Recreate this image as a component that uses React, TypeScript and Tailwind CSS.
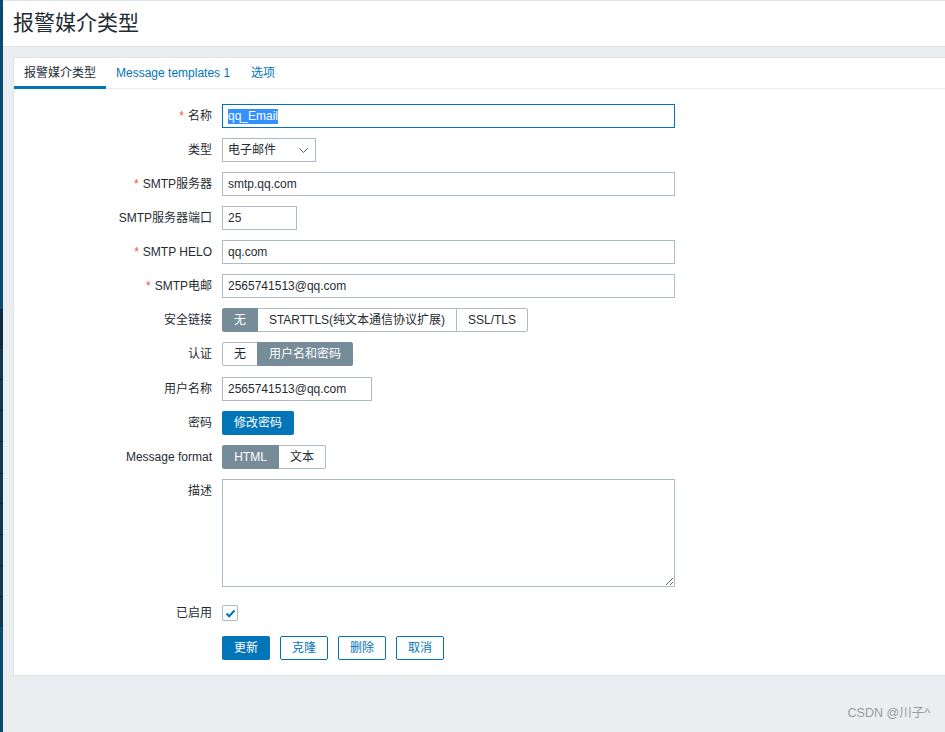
import React from "react";

const FONT = "font-['Liberation_Sans','Noto_Sans_CJK_SC',sans-serif]";

function Label({ text, req }: { text: string; req?: boolean }) {
  return (
    <div className="w-[198px] shrink-0 text-right text-[12px] leading-[14px] text-[#1f2c33]">
      {req && <span className="text-[#e54] mr-[4px]">*</span>}
      {text}
    </div>
  );
}

function Row({
  label,
  req,
  children,
  top,
}: {
  label: string;
  req?: boolean;
  children: React.ReactNode;
  top?: boolean;
}) {
  return (
    <div className={top ? "flex items-start" : "flex items-center"}>
      <div className={top ? "pt-[5px]" : ""}>
        <Label text={label} req={req} />
      </div>
      <div className="ml-[10px] flex">{children}</div>
    </div>
  );
}

function TextInput({ value, w }: { value: string; w: string }) {
  return (
    <input
      defaultValue={value}
      className={`${w} h-[24px] border border-[#acbbc4] bg-white px-[5px] text-[12px] text-[#1f2c33] outline-none ${FONT}`}
    />
  );
}

function Seg({
  items,
}: {
  items: { t: string; w: string; on?: boolean }[];
}) {
  return (
    <div className="flex h-[24px]">
      {items.map((it, i) => (
        <div
          key={i}
          className={`${it.w} flex items-center justify-center text-[12px] border ${
            i > 0 ? "-ml-px" : ""
          } ${i === 0 ? "rounded-l-[2px]" : ""} ${
            i === items.length - 1 ? "rounded-r-[2px]" : ""
          } ${
            it.on
              ? "bg-[#768d99] border-[#768d99] text-white relative z-10"
              : "bg-white border-[#acbbc4] text-[#1f2c33]"
          }`}
        >
          {it.t}
        </div>
      ))}
    </div>
  );
}

function Strip() {
  const seps = [379, 410, 441, 473, 503, 534, 565, 596];
  return (
    <div className="w-[3px] shrink-0 flex flex-col h-[732px]">
      <div className="h-[309px] bg-[#0b4a70]" />
      <div className="h-[40px] bg-[#0a2b40]" />
      <div className="h-[278px] bg-[#0e3a56] flex flex-col">
        {seps.map((s, i) => {
          const prev = i === 0 ? 349 : seps[i - 1] + 1;
          return (
            <React.Fragment key={i}>
              <div style={{ height: s - prev }} />
              <div className="h-px bg-[#081c29]" />
            </React.Fragment>
          );
        })}
      </div>
      <div className="flex-1 bg-[#0b4a70]" />
    </div>
  );
}

export default function App() {
  return (
    <div className={`relative flex w-full h-[732px] bg-[#ebeef0] overflow-hidden ${FONT}`}>
      <Strip />
      <div className="flex-1 flex flex-col">
        <header className="h-[47px] bg-white border-t border-b border-[#dfe4e7] pl-[10px] flex items-center">
          <h1 className="text-[21px] leading-[24px] text-[#1f2c33] font-normal -mt-[1px]">
            报警媒介类型
          </h1>
        </header>
        <div className="pl-[10px] pt-[10px]">
          <div className="bg-white border-l border-t border-b border-[#dfe4e7] pb-[15px]">
            <div className="flex h-[31px] border-b border-[#ebeef0] text-[12px]">
              <div className="relative px-[10px] flex items-center text-[#1f2c33]">
                报警媒介类型
                <div className="absolute left-0 right-0 -bottom-px h-[3px] bg-[#0275b8]" />
              </div>
              <div className="px-[10px] flex items-center text-[#0275b8]">
                Message templates 1
              </div>
              <div className="pl-[11px] pr-[10px] flex items-center text-[#0275b8]">选项</div>
            </div>

            <div className="pt-[15px] flex flex-col gap-[10px]">
              <Row label="名称" req>
                <div className="w-[453px] h-[24px] border border-[#0275b8] bg-white px-[5px] flex items-center text-[12px]">
                  <span className="bg-[#3390ff] text-white leading-[15px]">qq_Email</span>
                </div>
              </Row>
              <Row label="类型">
                <div className="w-[94px] h-[24px] border border-[#acbbc4] bg-white pl-[5px] pr-[7px] flex items-center justify-between text-[12px] text-[#1f2c33]">
                  <span>电子邮件</span>
                  <svg width="9" height="5" viewBox="0 0 9 5">
                    <path d="M0.5 0.5 L4.5 4.5 L8.5 0.5" fill="none" stroke="#4f5a60" strokeWidth="1" />
                  </svg>
                </div>
              </Row>
              <Row label="SMTP服务器" req>
                <TextInput value="smtp.qq.com" w="w-[453px]" />
              </Row>
              <Row label="SMTP服务器端口">
                <TextInput value="25" w="w-[75px]" />
              </Row>
              <Row label="SMTP HELO" req>
                <TextInput value="qq.com" w="w-[453px]" />
              </Row>
              <Row label="SMTP电邮" req>
                <TextInput value="2565741513@qq.com" w="w-[453px]" />
              </Row>
              <Row label="安全链接">
                <Seg
                  items={[
                    { t: "无", w: "w-[36px]", on: true },
                    { t: "STARTTLS(纯文本通信协议扩展)", w: "w-[200px]" },
                    { t: "SSL/TLS", w: "w-[72px]" },
                  ]}
                />
              </Row>
              <Row label="认证">
                <Seg
                  items={[
                    { t: "无", w: "w-[36px]" },
                    { t: "用户名和密码", w: "w-[96px]", on: true },
                  ]}
                />
              </Row>
              <div className="mt-px">
                <Row label="用户名称">
                  <TextInput value="2565741513@qq.com" w="w-[150px]" />
                </Row>
              </div>
              <Row label="密码">
                <button className="w-[72px] h-[24px] rounded-[2px] bg-[#0275b8] text-white text-[12px]">
                  修改密码
                </button>
              </Row>
              <Row label="Message format">
                <Seg
                  items={[
                    { t: "HTML", w: "w-[57px]", on: true },
                    { t: "文本", w: "w-[48px]" },
                  ]}
                />
              </Row>
              <Row label="描述" top>
                <textarea
                  className={`w-[453px] h-[108px] border border-[#acbbc4] bg-white outline-none resize ${FONT} text-[12px] px-[5px]`}
                />
              </Row>
              <div className="mt-[8px]">
                <Row label="已启用">
                  <div className="w-[16px] h-[16px] border border-[#acbbc4] rounded-[2px] bg-white flex items-center justify-center">
                    <svg width="11" height="9" viewBox="0 0 11 9">
                      <path d="M1.5 4.5 L4.2 7.2 L9.5 1.5" fill="none" stroke="#0275b8" strokeWidth="2" />
                    </svg>
                  </div>
                </Row>
              </div>
              <div className="mt-[5px] flex">
                <div className="w-[198px] shrink-0" />
                <div className="ml-[10px] flex gap-[10px]">
                  <button className="w-[48px] h-[24px] rounded-[2px] bg-[#0275b8] text-white text-[12px]">
                    更新
                  </button>
                  <button className="w-[48px] h-[24px] rounded-[2px] border border-[#0275b8] bg-white text-[#0275b8] text-[12px]">
                    克隆
                  </button>
                  <button className="w-[48px] h-[24px] rounded-[2px] border border-[#0275b8] bg-white text-[#0275b8] text-[12px]">
                    删除
                  </button>
                  <button className="w-[48px] h-[24px] rounded-[2px] border border-[#0275b8] bg-white text-[#0275b8] text-[12px]">
                    取消
                  </button>
                </div>
              </div>
            </div>
          </div>
        </div>
      </div>
      <div className="absolute right-[15px] bottom-[9px] text-[12.5px] text-[#9a9a9a]">
        CSDN @川子^
      </div>
    </div>
  );
}
